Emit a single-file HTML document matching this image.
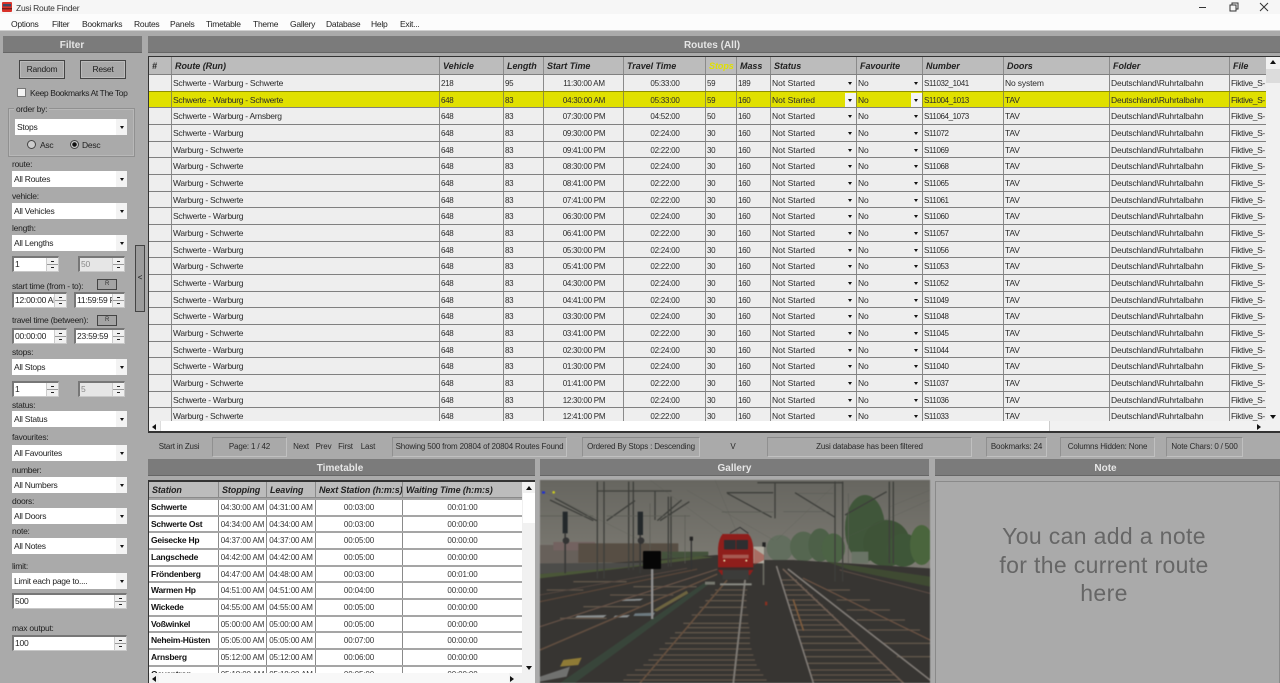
<!DOCTYPE html>
<html><head><meta charset="utf-8"><title>Zusi Route Finder</title>
<style>
html,body{margin:0;padding:0;width:1280px;height:683px;overflow:hidden;background:#aaa;font-family:"Liberation Sans",sans-serif;font-size:8.5px;letter-spacing:-.25px;color:#1e1e1e}
div,span,b,i{position:absolute;white-space:nowrap;box-sizing:border-box}
#all{left:0;top:0;width:1280px;height:683px;filter:blur(.3px);overflow:hidden}
.t{line-height:12px;height:12px}
.bar{background:#7b7b7b;color:#e6e6e6;font-weight:bold;font-size:10px;letter-spacing:0;text-align:center;height:17px;line-height:20px;border-bottom:1px solid #666}
.menu span{top:18px;line-height:12px;color:#222}
.btn{border:1px solid #444;background:#a8a8a8;box-shadow:inset 0 0 0 1px #bbb;text-align:center}
.sel{background:#fff;left:12px;width:115px;height:16px;line-height:16px;padding-left:2px;color:#222}
.sel::after{content:"";position:absolute;right:0;top:0;width:11px;height:100%;background:#f3f3f3}
.sel::before{content:"";position:absolute;z-index:2;right:3px;top:7px;border:2.5px solid transparent;border-top:3px solid #111;border-bottom:0}
.sp{background:#fff;border:1px solid #c8c8c8;border-top:2px solid #777;border-left:2px solid #777;height:16px;line-height:13px;padding-left:1px;color:#222;overflow:hidden}
.sp::after{content:"";position:absolute;right:0;top:0;width:11px;height:100%;background:linear-gradient(#222,#222) 50% 3px/3px 1px no-repeat,linear-gradient(#222,#222) 50% 9px/3px 1px no-repeat,linear-gradient(#999,#999) 0 50%/100% 1px no-repeat,#f0f0f0;border-left:1px solid #ccc}
.sp.d{background:#e6e6e6;color:#888}
.l{left:12px;line-height:12px;color:#222}
.rr{left:97px;width:20px;height:11px;background:#a4a4a4;border:1px solid #444;font-size:6px;line-height:9px;text-align:center;color:#333}
#grid{left:148px;top:56px;width:1132px;height:377px;border:1px solid #333;border-width:1px 0 2px 1px;overflow:hidden;background:#f0f0f0}
#rows{left:0;top:0;width:1117px;height:364px;overflow:hidden;background:#eee}
.r{left:0;width:1117px;height:17px;line-height:16px;background:#eee;border-top:1px solid #808080}
.r span{top:0;height:17px;padding-left:1px;border-right:1px solid #8a8a8a;color:#2a2a2a;overflow:hidden;letter-spacing:-.15px}
.r.h{background:#bcbcbc;height:17px;border-top:0;top:0}
.r.h span{font-style:italic;font-weight:bold;padding-left:3px;color:#222;font-size:9px;line-height:18px;letter-spacing:-.05px}
.r.y{background:#e0e000;border-top-color:#8f8f00}
.r.y span{border-right-color:#8f8f40}
.r span:nth-child(1){left:0;width:23px}
.r span:nth-child(2){left:23px;width:268px}
.r span:nth-child(3){left:291px;width:64px}
.r span:nth-child(4){left:355px;width:40px}
.r span:nth-child(5){left:395px;width:80px}
.r span:nth-child(6){left:475px;width:82px}
.r span:nth-child(7){left:557px;width:31px}
.r span:nth-child(8){left:588px;width:34px}
.r span:nth-child(9){left:622px;width:86px}
.r span:nth-child(10){left:708px;width:66px}
.r span:nth-child(11){left:774px;width:81px}
.r span:nth-child(12){left:855px;width:106px}
.r span:nth-child(13){left:961px;width:120px}
.r span:nth-child(14){left:1081px;width:36px;border-right:0}
.r:not(.h) span:nth-child(2){letter-spacing:-.28px}
.r:not(.h) span:nth-child(5),.r:not(.h) span:nth-child(6){text-align:center;font-size:8px;letter-spacing:-.25px;line-height:17px}
.r:not(.h) span:nth-child(3),.r:not(.h) span:nth-child(4),.r:not(.h) span:nth-child(7),.r:not(.h) span:nth-child(8){font-size:8px;letter-spacing:-.35px;line-height:17px}
.r:not(.h) span:nth-child(9){letter-spacing:0}
.r:not(.h) span:nth-child(11){font-size:8px;letter-spacing:-.4px;line-height:17px}
.r:not(.h) span:nth-child(14){letter-spacing:-.4px}
.r:not(.h) span:nth-child(9)::after,.r:not(.h) span:nth-child(10)::after{content:"";position:absolute;right:4px;top:7px;border:2px solid transparent;border-top:3px solid #111;border-bottom:0}
.r.y span:nth-child(9)::before,.r.y span:nth-child(10)::before{content:"";position:absolute;right:0;top:1px;width:11px;height:14px;background:#f4f4f4}
.sb{background:#f1f1f1}
.st{top:437px;height:20px;line-height:20px;text-align:center;font-size:8px;letter-spacing:-.16px;color:#2a2a2a}
.bx{border:1px solid #909090;border-top-color:#8a8a8a;border-right-color:#c0c0c0;border-bottom-color:#c0c0c0;background:#a9a9a9}
#tt{left:148px;top:480px;width:387px;height:203px;border:1px solid #333;border-width:2px 0 0 1px;background:#f0f0f0;overflow:hidden}
#ttr{left:0;top:0;width:373px;height:191px;overflow:hidden;background:#fff}
.q{left:0;width:373px;height:19px;background:#fff;border-top:2px solid #a5a5a5;line-height:15px}
.q span{top:0;height:17px;border-right:1px solid #8a8a8a;font-size:8px;letter-spacing:-.12px;color:#333;text-align:center;overflow:hidden}
.q span:nth-child(1){left:0;width:70px;text-align:left;padding-left:2px;font-weight:bold;color:#111;font-size:8.5px;letter-spacing:-.25px}
.q span:nth-child(2){left:70px;width:48px}
.q span:nth-child(3){left:118px;width:49px}
.q span:nth-child(4){left:167px;width:87px}
.q span:nth-child(5){left:254px;width:119px;border-right:0}
.q.h{background:#bcbcbc;border-top:0;border-bottom:1px solid #8a8a8a;height:16px;line-height:16px}
.q.h span{font-style:italic;font-weight:bold;text-align:left;padding-left:3px;font-size:9px;letter-spacing:-.1px;color:#222}
.a{width:0;height:0;border:3px solid transparent}
</style></head><body><div id="all">
<div style="left:0;top:0;width:1280px;height:14px;background:#f6f6f6"></div>
<div style="left:0;top:14px;width:1280px;height:17px;background:#fcfcfc;border-bottom:1px solid #d0d0d0"></div>
<svg style="position:absolute;left:2px;top:2px" width="10" height="10" viewBox="0 0 10 10"><rect width="10" height="10" rx="1" fill="#d9322a"/><rect x="1" y="2" width="8" height="2.4" fill="#3a4a66"/><rect x="0" y="6" width="10" height="1.4" fill="#7a1a16"/></svg>
<div class="t" style="left:16px;top:2px;color:#333">Zusi Route Finder</div>
<svg style="position:absolute;left:1195px;top:0" width="80" height="14" viewBox="0 0 80 14" fill="none" stroke="#333" stroke-width="1"><path d="M4 7.5H11"/><path d="M35 5h6v6h-6zM37 5V3h6v6h-2"/><path d="M65 3l8 8M73 3l-8 8"/></svg>
<div class="menu">
<span style="left:11px">Options</span><span style="left:52px">Filter</span><span style="left:82px">Bookmarks</span><span style="left:134px">Routes</span><span style="left:170px">Panels</span><span style="left:206px">Timetable</span><span style="left:253px">Theme</span><span style="left:290px">Gallery</span><span style="left:326px">Database</span><span style="left:371px">Help</span><span style="left:400px">Exit...</span>
</div>

<div class="bar" style="left:3px;top:36px;width:139px;padding-right:1px">Filter</div>
<div class="bar" style="left:148px;top:36px;width:1132px;padding-right:4px">Routes (All)</div>

<div class="btn" style="left:19px;top:60px;width:46px;height:19px;line-height:17px">Random</div>
<div class="btn" style="left:80px;top:60px;width:46px;height:19px;line-height:17px">Reset</div>
<div style="left:17px;top:88px;width:9px;height:9px;background:#f4f4f4;border:1px solid #777"></div>
<div class="l" style="left:30px;top:87px;letter-spacing:-.4px">Keep Bookmarks At The Top</div>
<div style="left:8px;top:108px;width:127px;height:49px;border:1px solid #909090;box-shadow:inset 0 0 0 1px #b8b8b8"></div>
<div class="l" style="left:14px;top:103px;background:#aaa;padding:0 2px">order by:</div>
<div class="sel" style="left:15px;top:119px;width:112px">Stops</div>
<div style="left:27px;top:140px;width:9px;height:9px;border-radius:50%;background:#ccc;border:1px solid #444"></div>
<div class="l" style="left:40px;top:139px">Asc</div>
<div style="left:70px;top:140px;width:9px;height:9px;border-radius:50%;background:radial-gradient(circle,#111 0 2px,#ccc 2.5px);border:1px solid #444"></div>
<div class="l" style="left:82px;top:139px">Desc</div>

<div class="l" style="top:158px">route:</div><div class="sel" style="top:171px">All Routes</div>
<div class="l" style="top:190px">vehicle:</div><div class="sel" style="top:203px">All Vehicles</div>
<div class="l" style="top:222px">length:</div><div class="sel" style="top:235px">All Lengths</div>
<div class="sp" style="left:12px;top:256px;width:47px">1</div><div class="sp d" style="left:78px;top:256px;width:47px">50</div>
<div class="l" style="top:280px">start time (from - to):</div><div class="rr" style="top:279px">R</div>
<div class="sp" style="left:12px;top:292px;width:55px">12:00:00 AM</div><div class="sp" style="left:74px;top:292px;width:51px">11:59:59 PM</div>
<div class="l" style="top:314px">travel time (between):</div><div class="rr" style="top:315px">R</div>
<div class="sp" style="left:12px;top:328px;width:55px">00:00:00</div><div class="sp" style="left:74px;top:328px;width:51px">23:59:59</div>
<div class="l" style="top:346px">stops:</div><div class="sel" style="top:359px">All Stops</div>
<div class="sp" style="left:12px;top:381px;width:47px">1</div><div class="sp d" style="left:78px;top:381px;width:47px">5</div>
<div class="l" style="top:399px">status:</div><div class="sel" style="top:411px">All Status</div>
<div class="l" style="top:431px">favourites:</div><div class="sel" style="top:445px">All Favourites</div>
<div class="l" style="top:464px">number:</div><div class="sel" style="top:477px">All Numbers</div>
<div class="l" style="top:495px">doors:</div><div class="sel" style="top:508px">All Doors</div>
<div class="l" style="top:525px">note:</div><div class="sel" style="top:538px">All Notes</div>
<div class="l" style="top:560px">limit:</div><div class="sel" style="top:573px">Limit each page to....</div>
<div class="sp" style="left:12px;top:593px;width:115px">500</div>
<div class="l" style="top:622px">max output:</div>
<div class="sp" style="left:12px;top:635px;width:115px">100</div>
<div style="left:135px;top:245px;width:10px;height:67px;background:#9c9c9c;border:1px solid #444;font-size:8px;line-height:63px;text-align:center;color:#111">&lt;</div>

<div id="grid">
<div id="rows">
<div class="r h"><span>#</span><span>Route (Run)</span><span>Vehicle</span><span>Length</span><span>Start Time</span><span>Travel Time</span><span style="color:#e0e000">Stops</span><span>Mass</span><span>Status</span><span>Favourite</span><span>Number</span><span>Doors</span><span>Folder</span><span>File</span></div>
<div class="r" style="top:17px"><span></span><span>Schwerte - Warburg - Schwerte</span><span>218</span><span>95</span><span>11:30:00 AM</span><span>05:33:00</span><span>59</span><span>189</span><span>Not Started</span><span>No</span><span>S11032_1041</span><span>No system</span><span>Deutschland\Ruhrtalbahn</span><span>Fiktive_S-</span></div>
<div class="r y" style="top:33.67px"><span></span><span>Schwerte - Warburg - Schwerte</span><span>648</span><span>83</span><span>04:30:00 AM</span><span>05:33:00</span><span>59</span><span>160</span><span>Not Started</span><span>No</span><span>S11004_1013</span><span>TAV</span><span>Deutschland\Ruhrtalbahn</span><span>Fiktive_S-</span></div>
<div class="r" style="top:50.33px"><span></span><span>Schwerte - Warburg - Arnsberg</span><span>648</span><span>83</span><span>07:30:00 PM</span><span>04:52:00</span><span>50</span><span>160</span><span>Not Started</span><span>No</span><span>S11064_1073</span><span>TAV</span><span>Deutschland\Ruhrtalbahn</span><span>Fiktive_S-</span></div>
<div class="r" style="top:67px"><span></span><span>Schwerte - Warburg</span><span>648</span><span>83</span><span>09:30:00 PM</span><span>02:24:00</span><span>30</span><span>160</span><span>Not Started</span><span>No</span><span>S11072</span><span>TAV</span><span>Deutschland\Ruhrtalbahn</span><span>Fiktive_S-</span></div>
<div class="r" style="top:83.67px"><span></span><span>Warburg - Schwerte</span><span>648</span><span>83</span><span>09:41:00 PM</span><span>02:22:00</span><span>30</span><span>160</span><span>Not Started</span><span>No</span><span>S11069</span><span>TAV</span><span>Deutschland\Ruhrtalbahn</span><span>Fiktive_S-</span></div>
<div class="r" style="top:100.33px"><span></span><span>Warburg - Schwerte</span><span>648</span><span>83</span><span>08:30:00 PM</span><span>02:24:00</span><span>30</span><span>160</span><span>Not Started</span><span>No</span><span>S11068</span><span>TAV</span><span>Deutschland\Ruhrtalbahn</span><span>Fiktive_S-</span></div>
<div class="r" style="top:117px"><span></span><span>Warburg - Schwerte</span><span>648</span><span>83</span><span>08:41:00 PM</span><span>02:22:00</span><span>30</span><span>160</span><span>Not Started</span><span>No</span><span>S11065</span><span>TAV</span><span>Deutschland\Ruhrtalbahn</span><span>Fiktive_S-</span></div>
<div class="r" style="top:133.67px"><span></span><span>Warburg - Schwerte</span><span>648</span><span>83</span><span>07:41:00 PM</span><span>02:22:00</span><span>30</span><span>160</span><span>Not Started</span><span>No</span><span>S11061</span><span>TAV</span><span>Deutschland\Ruhrtalbahn</span><span>Fiktive_S-</span></div>
<div class="r" style="top:150.33px"><span></span><span>Schwerte - Warburg</span><span>648</span><span>83</span><span>06:30:00 PM</span><span>02:24:00</span><span>30</span><span>160</span><span>Not Started</span><span>No</span><span>S11060</span><span>TAV</span><span>Deutschland\Ruhrtalbahn</span><span>Fiktive_S-</span></div>
<div class="r" style="top:167px"><span></span><span>Warburg - Schwerte</span><span>648</span><span>83</span><span>06:41:00 PM</span><span>02:22:00</span><span>30</span><span>160</span><span>Not Started</span><span>No</span><span>S11057</span><span>TAV</span><span>Deutschland\Ruhrtalbahn</span><span>Fiktive_S-</span></div>
<div class="r" style="top:183.67px"><span></span><span>Schwerte - Warburg</span><span>648</span><span>83</span><span>05:30:00 PM</span><span>02:24:00</span><span>30</span><span>160</span><span>Not Started</span><span>No</span><span>S11056</span><span>TAV</span><span>Deutschland\Ruhrtalbahn</span><span>Fiktive_S-</span></div>
<div class="r" style="top:200.33px"><span></span><span>Warburg - Schwerte</span><span>648</span><span>83</span><span>05:41:00 PM</span><span>02:22:00</span><span>30</span><span>160</span><span>Not Started</span><span>No</span><span>S11053</span><span>TAV</span><span>Deutschland\Ruhrtalbahn</span><span>Fiktive_S-</span></div>
<div class="r" style="top:217px"><span></span><span>Schwerte - Warburg</span><span>648</span><span>83</span><span>04:30:00 PM</span><span>02:24:00</span><span>30</span><span>160</span><span>Not Started</span><span>No</span><span>S11052</span><span>TAV</span><span>Deutschland\Ruhrtalbahn</span><span>Fiktive_S-</span></div>
<div class="r" style="top:233.67px"><span></span><span>Schwerte - Warburg</span><span>648</span><span>83</span><span>04:41:00 PM</span><span>02:24:00</span><span>30</span><span>160</span><span>Not Started</span><span>No</span><span>S11049</span><span>TAV</span><span>Deutschland\Ruhrtalbahn</span><span>Fiktive_S-</span></div>
<div class="r" style="top:250.33px"><span></span><span>Schwerte - Warburg</span><span>648</span><span>83</span><span>03:30:00 PM</span><span>02:24:00</span><span>30</span><span>160</span><span>Not Started</span><span>No</span><span>S11048</span><span>TAV</span><span>Deutschland\Ruhrtalbahn</span><span>Fiktive_S-</span></div>
<div class="r" style="top:267px"><span></span><span>Warburg - Schwerte</span><span>648</span><span>83</span><span>03:41:00 PM</span><span>02:22:00</span><span>30</span><span>160</span><span>Not Started</span><span>No</span><span>S11045</span><span>TAV</span><span>Deutschland\Ruhrtalbahn</span><span>Fiktive_S-</span></div>
<div class="r" style="top:283.67px"><span></span><span>Schwerte - Warburg</span><span>648</span><span>83</span><span>02:30:00 PM</span><span>02:24:00</span><span>30</span><span>160</span><span>Not Started</span><span>No</span><span>S11044</span><span>TAV</span><span>Deutschland\Ruhrtalbahn</span><span>Fiktive_S-</span></div>
<div class="r" style="top:300.33px"><span></span><span>Schwerte - Warburg</span><span>648</span><span>83</span><span>01:30:00 PM</span><span>02:24:00</span><span>30</span><span>160</span><span>Not Started</span><span>No</span><span>S11040</span><span>TAV</span><span>Deutschland\Ruhrtalbahn</span><span>Fiktive_S-</span></div>
<div class="r" style="top:317px"><span></span><span>Warburg - Schwerte</span><span>648</span><span>83</span><span>01:41:00 PM</span><span>02:22:00</span><span>30</span><span>160</span><span>Not Started</span><span>No</span><span>S11037</span><span>TAV</span><span>Deutschland\Ruhrtalbahn</span><span>Fiktive_S-</span></div>
<div class="r" style="top:333.67px"><span></span><span>Schwerte - Warburg</span><span>648</span><span>83</span><span>12:30:00 PM</span><span>02:24:00</span><span>30</span><span>160</span><span>Not Started</span><span>No</span><span>S11036</span><span>TAV</span><span>Deutschland\Ruhrtalbahn</span><span>Fiktive_S-</span></div>
<div class="r" style="top:350.33px"><span></span><span>Warburg - Schwerte</span><span>648</span><span>83</span><span>12:41:00 PM</span><span>02:22:00</span><span>30</span><span>160</span><span>Not Started</span><span>No</span><span>S11033</span><span>TAV</span><span>Deutschland\Ruhrtalbahn</span><span>Fiktive_S-</span></div>
</div>
<!-- vertical scrollbar -->
<div class="sb" style="left:1117px;top:0;width:14px;height:364px"></div>
<div style="left:1117px;top:12px;width:14px;height:14px;background:#dcdcdc"></div>
<div class="a" style="left:1121px;top:3px;border-bottom:4px solid #111;border-top:0"></div>
<div class="a" style="left:1121px;top:358px;border-top:4px solid #111;border-bottom:0"></div>
<!-- horizontal scrollbar -->
<div class="sb" style="left:0;top:364px;width:1131px;height:12px"></div>
<div style="left:11px;top:364px;width:890px;height:11px;background:#fff;border-left:1px solid #ddd;border-right:1px solid #ccc"></div>
<div class="a" style="left:3px;top:367px;border-right:4px solid #111;border-left:0"></div>
<div class="a" style="left:1108px;top:367px;border-left:4px solid #111;border-right:0"></div>
</div>

<div class="st" style="left:150px;width:58px">Start in Zusi</div>
<div class="st bx" style="left:212px;width:75px;line-height:18px">Page: 1 / 42</div>
<div class="st" style="left:291px;width:20px">Next</div>
<div class="st" style="left:315px;width:17px">Prev</div>
<div class="st" style="left:337px;width:17px">First</div>
<div class="st" style="left:359px;width:18px">Last</div>
<div class="st bx" style="left:392px;width:175px;line-height:18px">Showing 500 from 20804 of 20804 Routes Found</div>
<div class="st bx" style="left:582px;width:118px;line-height:18px">Ordered By Stops : Descending</div>
<div class="st" style="left:723px;width:20px">V</div>
<div class="st bx" style="left:767px;width:205px;line-height:18px">Zusi database has been filtered</div>
<div class="st bx" style="left:986px;width:61px;line-height:18px">Bookmarks: 24</div>
<div class="st bx" style="left:1060px;width:95px;line-height:18px">Columns Hidden: None</div>
<div class="st bx" style="left:1166px;width:77px;line-height:18px">Note Chars: 0 / 500</div>

<div class="bar" style="left:148px;top:459px;width:387px;padding-right:3px">Timetable</div>
<div class="bar" style="left:540px;top:459px;width:389px">Gallery</div>
<div class="bar" style="left:935px;top:459px;width:345px;padding-right:4px">Note</div>

<div id="tt">
<div id="ttr">
<div class="q h"><span>Station</span><span>Stopping</span><span>Leaving</span><span>Next Station (h:m:s)</span><span>Waiting Time (h:m:s)</span></div>
<div class="q" style="top:16px"><span>Schwerte</span><span>04:30:00 AM</span><span>04:31:00 AM</span><span>00:03:00</span><span>00:01:00</span></div>
<div class="q" style="top:32.7px"><span>Schwerte Ost</span><span>04:34:00 AM</span><span>04:34:00 AM</span><span>00:03:00</span><span>00:00:00</span></div>
<div class="q" style="top:49.4px"><span>Geisecke Hp</span><span>04:37:00 AM</span><span>04:37:00 AM</span><span>00:05:00</span><span>00:00:00</span></div>
<div class="q" style="top:66px"><span>Langschede</span><span>04:42:00 AM</span><span>04:42:00 AM</span><span>00:05:00</span><span>00:00:00</span></div>
<div class="q" style="top:82.7px"><span>Fröndenberg</span><span>04:47:00 AM</span><span>04:48:00 AM</span><span>00:03:00</span><span>00:01:00</span></div>
<div class="q" style="top:99.4px"><span>Warmen Hp</span><span>04:51:00 AM</span><span>04:51:00 AM</span><span>00:04:00</span><span>00:00:00</span></div>
<div class="q" style="top:116px"><span>Wickede</span><span>04:55:00 AM</span><span>04:55:00 AM</span><span>00:05:00</span><span>00:00:00</span></div>
<div class="q" style="top:132.7px"><span>Voßwinkel</span><span>05:00:00 AM</span><span>05:00:00 AM</span><span>00:05:00</span><span>00:00:00</span></div>
<div class="q" style="top:149.4px"><span>Neheim-Hüsten</span><span>05:05:00 AM</span><span>05:05:00 AM</span><span>00:07:00</span><span>00:00:00</span></div>
<div class="q" style="top:166px"><span>Arnsberg</span><span>05:12:00 AM</span><span>05:12:00 AM</span><span>00:06:00</span><span>00:00:00</span></div>
<div class="q" style="top:182.7px"><span>Oeventrop</span><span>05:18:00 AM</span><span>05:18:00 AM</span><span>00:05:00</span><span>00:00:00</span></div>
</div>
<div class="sb" style="left:374px;top:0;width:12px;height:191px"></div>
<div style="left:374px;top:11px;width:12px;height:30px;background:#fff"></div>
<div class="a" style="left:377px;top:4px;border-bottom:4px solid #111;border-top:0"></div>
<div class="a" style="left:377px;top:184px;border-top:4px solid #111;border-bottom:0"></div>
<div class="sb" style="left:0;top:191px;width:386px;height:12px"></div>
<div style="left:10px;top:191px;width:350px;height:12px;background:#f8f8f8"></div>
<div class="a" style="left:3px;top:194px;border-right:4px solid #111;border-left:0"></div>
<div class="a" style="left:361px;top:194px;border-left:4px solid #111;border-right:0"></div>
</div>

<svg style="position:absolute;left:540px;top:480px;filter:blur(.5px)" width="390" height="203" viewBox="0 0 1170 609">
<defs><linearGradient id="s" x1="0" y1="0" x2="0" y2="1"><stop offset="0" stop-color="#676660"/><stop offset="1" stop-color="#7f7d75"/></linearGradient></defs>
<rect width="1170" height="290" fill="url(#s)"/>
<rect y="195" width="170" height="55" fill="#67605a"/>
<rect x="40" y="186" width="125" height="25" fill="#736260"/>
<rect x="115" y="190" width="300" height="58" fill="#574e44"/>
<rect x="365" y="215" width="140" height="40" fill="#44523c"/>
<ellipse cx="720" cy="205" rx="40" ry="40" fill="#626e5e"/>
<ellipse cx="790" cy="200" rx="40" ry="45" fill="#556650"/>
<ellipse cx="840" cy="195" rx="35" ry="50" fill="#4d6048"/>
<ellipse cx="880" cy="205" rx="35" ry="45" fill="#4c6345"/>
<ellipse cx="975" cy="145" rx="60" ry="100" fill="#40563a"/>
<ellipse cx="1040" cy="190" rx="70" ry="70" fill="#3e5337"/>
<ellipse cx="1090" cy="210" rx="50" ry="50" fill="#3e5638"/>
<ellipse cx="1145" cy="195" rx="35" ry="60" fill="#4a653d"/>
<rect x="935" y="215" width="50" height="35" fill="#6a7466"/>
<polygon points="0,265 530,225 670,240 760,240 1170,265 1170,609 0,609" fill="#373532"/>
<polygon points="0,282 0,295 520,232 480,228" fill="#4a5638"/>
<polygon points="860,245 1170,290 1170,320 930,270" fill="#3f4a32"/>
<polygon points="0,250 0,282 250,262 350,248" fill="#4c4c49"/>
<polygon points="490,310 510,310 105,609 60,609" fill="#38453a"/>
<polygon points="0,590 90,560 80,590 0,605" fill="#70716f"/>
<polygon points="70,540 125,533 115,555 60,560" fill="#8f7b36"/>
<g fill="#8a8f90"><polygon points="112,407 200,405 190,413 105,413"/><polygon points="225,407 270,405 262,412 220,413"/><polygon points="285,400 345,398 340,408 280,408" fill="#6d7a80"/><polygon points="250,358 310,356 300,362 245,363"/></g>
<polygon points="340,390 440,332 445,340 350,395" fill="#6d6440"/>
<g stroke="#615549" stroke-width="4" fill="none">
<path d="M525 330H622M512 345H620M496 362H620M478 382H620M455 405H625M430 430H625M405 458H630M375 490H630M340 525H640M310 555H650M260 585H670"/>
<path d="M440 443H628M390 474H630M358 507H635M325 540H645M285 570H660M250 600H680"/>
<path d="M723 300H771M732 330H802M741 360H833M751 390H864M760 420H895M770 450H926M782 490H967M795 530H1008M807 570H1049M817 600H1080"/>
<path d="M727 315H786M737 345H818M746 375H848M755 405H880M765 435H910M776 470H946M788 510H987M801 550H1028M812 585H1065"/>
<path d="M860 330H930M890 360H990M920 390H1050M950 420H1095M985 450H1140M1030 490H1170M1070 530H1170"/>
<path d="M60 415H200M130 380H300M210 345H400M280 320H470"/>
<path d="M20 330H130M100 305H260"/>
</g>
<g fill="none" stroke-linecap="round">
<path d="M560 302L300 609" stroke="#65503f" stroke-width="5"/>
<path d="M615 302L580 609" stroke="#7c7872" stroke-width="6"/>
<path d="M710 260L820 609" stroke="#7f7a75" stroke-width="5"/>
<path d="M730 268L1090 609" stroke="#6f5f54" stroke-width="5"/>
<path d="M745 268L1170 600" stroke="#7f7a75" stroke-width="5"/>
<path d="M790 295L1170 480" stroke="#6a5243" stroke-width="4"/>
<path d="M760 360L790 450" stroke="#7e5c3e" stroke-width="5"/>
<path d="M530 268L0 440" stroke="#645146" stroke-width="4"/>
<path d="M530 283L0 510" stroke="#614e40" stroke-width="5"/>
<path d="M470 268L0 365" stroke="#574539" stroke-width="4"/>
<path d="M440 265L0 345" stroke="#53463f" stroke-width="3"/>
<path d="M900 270L1170 340" stroke="#5c4c44" stroke-width="3"/>
</g>
<rect x="540" y="310" width="95" height="6" fill="#8a8a84"/>
<rect x="495" y="305" width="30" height="9" fill="#77786f"/>
<rect x="668" y="195" width="5" height="120" fill="#6a6a62"/>
<g stroke="#3e3f3b" fill="none" stroke-width="4">
<path d="M172 5V296M192 5V296M266 5V270M280 5V270M385 50V260M393 50V260M885 5V305M908 5V305M1048 5V250M1060 5V250"/>
<path d="M172 33H395M345 35V120M652 8H910M705 10V115M560 38H700M30 60L160 122M45 55L170 122M200 122L285 62M352 122L425 60M360 122L448 65M562 40L695 112M765 38L885 112M915 105L1040 35"/>
</g>
<g stroke="#5a5b54" fill="none" stroke-width="2">
<path d="M330 70V250M435 105V250M925 40V250M545 96H700M730 95H870M775 40H880M0 108H160M200 108H450"/>
</g>
<g stroke="#55564f" fill="none" stroke-width="1" opacity=".7">
<path d="M440 30L700 180M525 0L600 180M710 180L900 0M1170 60L900 180M0 30L420 240M1050 80L1170 30M330 0L560 170"/>
</g>
<rect x="68" y="95" width="15" height="65" fill="#23282a"/><rect x="73" y="160" width="5" height="120" fill="#3a3a38"/><circle cx="78" cy="182" r="10" fill="#333"/>
<rect x="293" y="95" width="16" height="70" fill="#23282a"/><rect x="298" y="165" width="5" height="115" fill="#3a3a38"/><circle cx="303" cy="182" r="10" fill="#333"/>
<rect x="452" y="172" width="4" height="98" fill="#333"/><rect x="449" y="170" width="10" height="12" fill="#222"/>
<rect x="667" y="187" width="10" height="14" fill="#222"/>
<rect x="333" y="262" width="7" height="155" fill="#8f8f8f"/>
<rect x="309" y="213" width="54" height="54" rx="3" fill="#060606"/>
<path d="M570 160L600 142L625 160" stroke="#333" stroke-width="3" fill="none"/>
<rect x="640" y="200" width="32" height="50" fill="#b0aca0"/>
<polygon points="642,205 672,225 672,240 642,255" fill="#a03028" opacity=".5"/>
<path d="M548 162H625Q638 175 640 205V270L630 285H545L534 270V205Q536 175 548 162Z" fill="#8f1e1b"/>
<rect x="552" y="180" width="72" height="28" rx="2" fill="#2e2e30"/>
<rect x="587" y="180" width="2" height="28" fill="#8f1e1b"/>
<rect x="548" y="224" width="78" height="11" fill="#a65a52"/>
<rect x="534" y="262" width="106" height="8" fill="#3d2a28"/>
<rect x="548" y="270" width="78" height="28" fill="#3c3c3a"/>
<circle cx="553" cy="242" r="3" fill="#e8e4b0"/><circle cx="619" cy="242" r="3" fill="#e8e4b0"/>
<rect x="675" y="365" width="7" height="11" fill="#8a3020"/>
<rect x="6" y="34" width="9" height="7" fill="#2030d0"/><circle cx="41" cy="37" r="4" fill="#c8c820"/>
</svg>

<div style="left:935px;top:481px;width:345px;height:202px;border:1px solid #8a8a8a;border-bottom:0;background:#aaa"></div>
<div style="left:935px;top:522px;width:338px;text-align:center;font-size:23px;line-height:28.7px;color:#666;white-space:normal;letter-spacing:.35px">You can add a note<br>for the current route<br>here</div>
</div></body></html>
